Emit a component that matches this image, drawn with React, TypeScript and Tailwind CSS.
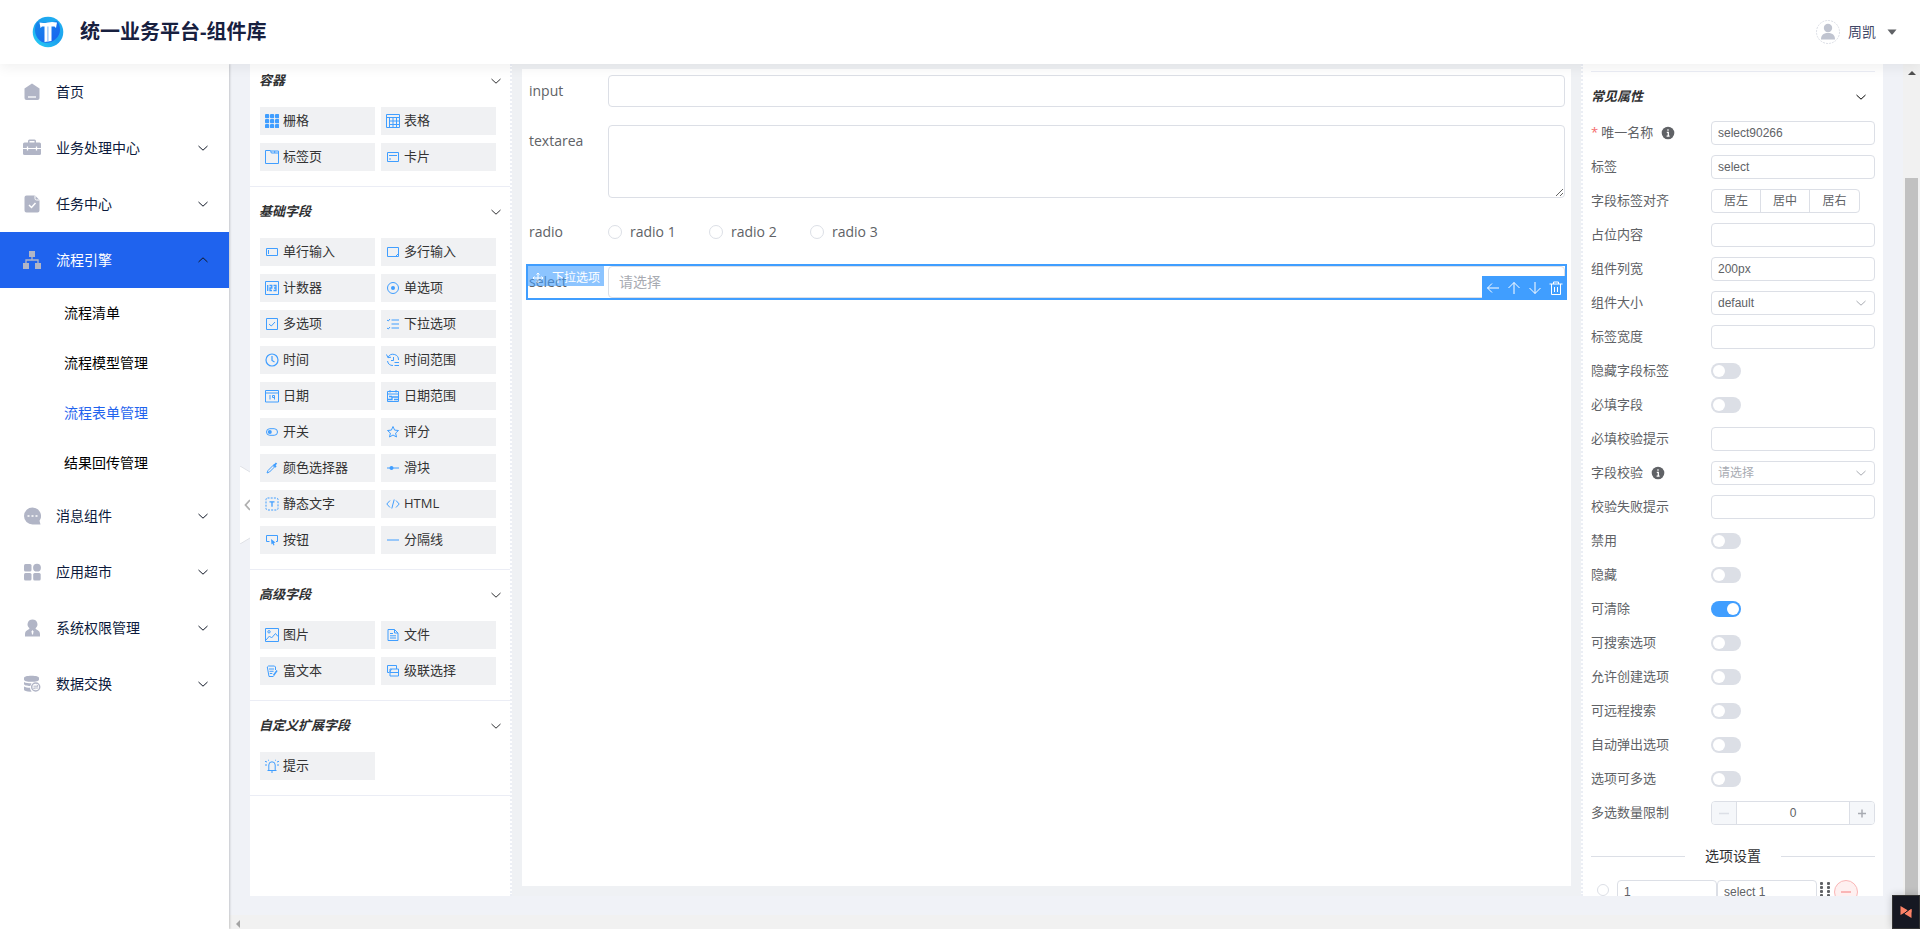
import React from "react";
import clsx from "clsx";

/* ---------- shared icons ---------- */

const Chevron = ({ up, className }: { up?: boolean; className?: string }) => (
    <svg viewBox="0 0 12 12" className={clsx("size-3 shrink-0", className)} fill="none" stroke="currentColor" strokeWidth="1">
        <path d={up ? "M1.5 8 6 3.8 10.5 8" : "M1.5 4 6 8.2 10.5 4"} />
    </svg>
);

const InfoIcon = () => (
    <svg viewBox="0 0 14 14" className="ml-2 size-3.5 shrink-0" fill="#606266">
        <circle cx="7" cy="7" r="6.3" />
        <path d="M7 3.2v1.5M5.8 6.3h1.5v4M5.6 10.2h3" stroke="#fff" strokeWidth="1.3" fill="none" />
    </svg>
);

const Logo = () => (
    <svg viewBox="0 0 32 32" className="size-8">
        <defs>
            <linearGradient id="ring" x1="0" y1="1" x2="1" y2="0">
                <stop offset="0" stopColor="#2bd5f5" />
                <stop offset="0.5" stopColor="#1ba0ee" />
                <stop offset="1" stopColor="#22b4f2" />
            </linearGradient>
            <linearGradient id="core" x1="0" y1="0" x2="1" y2="1">
                <stop offset="0" stopColor="#1689ea" />
                <stop offset="1" stopColor="#1a5ff0" />
            </linearGradient>
        </defs>
        <circle cx="16" cy="16" r="15.3" fill="url(#ring)" />
        <path d="M5 6C1 13 3 22 10 26c9 3 18-4 18-12 0-4-1-7-3-9-7 2-13 2-20 1z" fill="url(#core)" />
        <path d="M7.500 6.500c3 .8 5.700.5 8.200-.1 3-.7 6-.7 9.300.1l-1 5.500-1.500-1.500h-3v14.500l-7 1V10.500h-2.500L8.500 12z" fill="#fff" />
        <path d="M15.300 10.500h1.200v15l-1.200.2z" fill="#8fc1fa" />
    </svg>
);

/* ---------- side menu ---------- */

const menuIcons: Record<string, React.ReactNode> = {
    home: (
        <>
            <path d="M9 .5 16.500 5.500V15a2 2 0 0 1-2 2h-11a2 2 0 0 1-2-2V5.500z" />
            <path d="M5 14h8" stroke="#fff" strokeWidth="1.300" />
        </>
    ),
    case: (
        <>
            <path d="M5 3.500V2a1.500 1.500 0 0 1 1.500-1.500h5A1.500 1.500 0 0 1 13 2v1.500h3.500A1.500 1.500 0 0 1 18 5v4H0V5a1.500 1.500 0 0 1 1.500-1.500zM6.500 3.500h5V2h-5z" fillRule="evenodd" />
            <path d="M0 10h18v4.500a1.500 1.500 0 0 1-1.500 1.500h-15A1.500 1.500 0 0 1 0 14.500z" />
            <path d="M4.500 7.500v4M13.500 7.500v4" stroke="#fff" strokeWidth="1.300" />
        </>
    ),
    task: (
        <>
            <path d="M3.500.5H12l4.500 4.500v10.500a2 2 0 0 1-2 2h-11a2 2 0 0 1-2-2v-13a2 2 0 0 1 2-2z" />
            <path d="M12 .5v3a1.500 1.500 0 0 0 1.500 1.500h3" stroke="#fff" fill="none" />
            <path d="m6 10 2.500 2.500L12.500 8" stroke="#fff" strokeWidth="1.500" fill="none" />
        </>
    ),
    flow: (
        <>
            <path d="M6 0h6v6H6zM0 12h6v6H0zM12 12h6v6h-6z" />
            <path d="M9 5v4M3 12.500V9h12v3.500" stroke="#b1b5c6" strokeWidth="1.300" fill="none" />
        </>
    ),
    message: (
        <>
            <path d="M9.500.5a8.500 8.500 0 0 1 7 13.300l1 3.700H9.500a8.500 8.500 0 0 1 0-17z" />
            <path d="M4.500 8.200h2v1.500h-2zM8.500 8.200h2v1.500h-2zM12.500 8.200h2v1.500h-2z" fill="#fff" />
        </>
    ),
    apps: (
        <>
            <rect x="1" y="1" width="7.500" height="7.500" rx="1.500" />
            <circle cx="14" cy="4.700" r="3.900" />
            <rect x="1" y="10" width="7.500" height="7.500" rx="1.500" />
            <rect x="10.200" y="10" width="7.500" height="7.500" rx="1.500" />
        </>
    ),
    user: (
        <>
            <path d="M9.500.5a4.900 4.900 0 0 1 3 8.800c.2 1 1 1.200 2.300 1.900 1.500.8 2.200 2 2.200 4v2.300H2v-2.300c0-2 .7-3.200 2.200-4 1.300-.7 2.100-.9 2.300-1.900A4.900 4.900 0 0 1 9.500.5z" />
            <path d="m9.500 11 1 1.500-.5 3h-1l-.5-3z" fill="#fff" />
        </>
    ),
    data: (
        <>
            <path d="M1 3C1 1.500 4 .7 8.500.7S16 1.500 16 3v1.500c0 1.500-3 2.300-7.500 2.300S1 6 1 4.500z" />
            <path d="M1 7c2 1.200 4 1.300 7.500 1.300L7.300 11C4 11 1 10.300 1 9zM1 11.500c1.500 1 3.500 1.200 6 1.300.2 1.700.8 3 1.800 3.800C4 16.800 1 16 1 14.500z" />
            <circle cx="12.700" cy="12" r="4" fill="none" stroke="#b1b5c6" strokeWidth="1.500" />
            <path d="M10.500 11.200h4.500l-1.200-1.200M15 13h-4.500l1.200 1.200" stroke="#b1b5c6" fill="none" />
        </>
    ),
};

const menu = [
    { icon: "home", label: "首页" },
    { icon: "case", label: "业务处理中心", expandable: true },
    { icon: "task", label: "任务中心", expandable: true },
    { icon: "flow", label: "流程引擎", expandable: true, children: ["流程清单", "流程模型管理", "流程表单管理", "结果回传管理"] },
    { icon: "message", label: "消息组件", expandable: true },
    { icon: "apps", label: "应用超市", expandable: true },
    { icon: "user", label: "系统权限管理", expandable: true },
    { icon: "data", label: "数据交换", expandable: true },
];

const SideMenu = () => (
    <nav className="z-10 w-[229px] shrink-0 bg-white text-sm text-[#0c1a3c] shadow-[1px_0_2px_rgba(0,0,0,0.18)]">
        {menu.map((item) => (
            <div key={item.label}>
                <button
                    type="button"
                    className={clsx("flex h-14 w-full items-center pr-5 pl-[23px]", item.children && "bg-[#1f63ee] text-white")}
                >
                    <svg viewBox="0 0 18 18" className="size-[18px]" fill="#b1b5c6">
                        {menuIcons[item.icon]}
                    </svg>
                    <span className="ml-[15px] flex-1 text-left">{item.label}</span>
                    {item.expandable && <Chevron up={!!item.children} className="text-[#111827]" />}
                </button>
                {item.children?.map((child) => (
                    <a
                        key={child}
                        href="#"
                        className={clsx("flex h-[50px] items-center pl-16", child === "流程表单管理" ? "text-[#1f63ee]" : "text-black")}
                    >
                        {child}
                    </a>
                ))}
            </div>
        ))}
    </nav>
);

/* ---------- widget palette ---------- */

const widgetIcons: Record<string, React.ReactNode> = {
    栅格: (
        <g fill="#409eff" stroke="none">
            {[0, 5, 10].map((y) =>
                [0, 5, 10].map((x) => <rect key={`${x}-${y}`} x={x} y={y} width="4.200" height="4.200" rx="1" />)
            )}
        </g>
    ),
    表格: <path d="M.5.5h13v13H.5zM.5 3.500h13M3.500 3.500v10M3.500 7h10M3.500 10.500h10M7 3.500v10M10.500 3.500v10" />,
    标签页: <path d="M.5 13.500V.5h5l.8 2.500h7.200v10.500zM6 1h7.500v2M9.700 1v2" />,
    卡片: <path d="M1.500 2.500h11v9h-11zM3 5.500h8M3 9h2" />,
    单行输入: <path d="M1.500 3.500h11v7h-11zM3.500 5v4" />,
    多行输入: <path d="M1.500 2.500h11v9h-11zM10 11l2-2" />,
    计数器: (
        <>
            <path d="M.5.5h13v13H.5z" />
            <path d="M2.700 4v6M4.500 4.500h2.300V7H5v2.500h2M8.500 4.500h2.500v5H8.500M9 7h2" strokeWidth="1.300" />
        </>
    ),
    单选项: (
        <>
            <circle cx="7" cy="7" r="5.500" />
            <circle cx="7" cy="7" r="2" fill="#409eff" stroke="none" />
        </>
    ),
    多选项: <path d="M1.500 1.500h11v11h-11zM4 7l2.300 2L10 5" />,
    下拉选项: <path d="M5.500 3h7.500M5.500 7h7.500M5.500 11h7.500M1 3l1.300 1L4 2M1 11l1.300 1L4 10" />,
    时间: (
        <>
            <circle cx="7" cy="7" r="6" strokeWidth="1.200" />
            <path d="M7 3v4.500l2.500 1.500" strokeWidth="1.200" />
        </>
    ),
    时间范围: (
        <>
            <path d="M2 4.500A5.500 5.500 0 0 1 12.500 7M1.500 8A5.500 5.500 0 0 0 7 12.500" />
            <path d="M.5 1.500 2 4.700l3-.5M7.500 4v3.500H5M8.500 9.500h4.500M8.500 12.500h4.500" />
        </>
    ),
    日期: (
        <>
            <path d="M.5 1.500h13v11.500H.5zM.5 4h13" />
            <path d="M5 6v4.500M9.500 10.500V6.500h-2v2h2" />
        </>
    ),
    日期范围: (
        <>
            <path d="M1.500 2.500h11v10h-11zM1.500 5h11M4 1v2.500M10 1v2.500" />
            <path d="M1.500 10.500H6V8h6.500M3 7.500h3M8 10.500h4" strokeWidth="1.300" />
        </>
    ),
    开关: (
        <>
            <rect x="1.500" y="3.700" width="11" height="6.600" rx="3.300" />
            <circle cx="4.800" cy="7" r="2" fill="#409eff" stroke="none" />
        </>
    ),
    评分: <path d="m7 1.500 1.600 3.600 3.900.4-2.900 2.600.9 3.900L7 10l-3.500 2 .9-3.900-2.900-2.600 3.900-.4z" />,
    颜色选择器: (
        <>
            <path d="m2 12 1-2.500 5-5 1.500 1.500-5 5z" />
            <path d="m8.500 3.500 2.500 2.500M9 5l2.500-3" strokeWidth="1.800" />
        </>
    ),
    滑块: (
        <>
            <path d="M1 7h12" />
            <circle cx="5.500" cy="7" r="2" fill="#409eff" stroke="none" />
        </>
    ),
    静态文字: (
        <>
            <rect x="1" y="1" width="12" height="12" rx="1.500" strokeDasharray="2 1.200" />
            <path d="M4.500 4.800h5M7 4.800v5" strokeWidth="1.300" />
        </>
    ),
    HTML: <path d="M4 3.500.8 7 4 10.500M10 3.500 13.200 7 10 10.500M8.200 2.500 5.800 11.500" />,
    按钮: (
        <>
            <path d="M4.500 8.500H1.500V2.500h11v6h-1.500" />
            <path d="m6 6 4.500 3.500-1.800.4.8 2.100-1 .4-.9-2-1.100 1.100z" fill="#409eff" stroke="none" />
        </>
    ),
    分隔线: <path d="M1 7h12" />,
    图片: (
        <>
            <path d="M.5.5h13v13H.5zM1 12l3.500-4 2 2L10.500 5.500 13 8.500" />
            <circle cx="4" cy="3.800" r="1.200" />
        </>
    ),
    文件: <path d="M2 1.500h6.500l3.500 3.500v7.500H2zM8.500 1.500V5H12M4 5.500h3M4 7.800h6M4 10h6" />,
    富文本: (
        <>
            <path d="M8.500 12.500H4L2.300 3l1.200-1h6l1 1v3M4 5h5M4.500 7.300h4M4.800 9.500h2.500" />
            <path d="m8.500 11.500 3.500-5" strokeWidth="1.500" />
        </>
    ),
    级联选择: <path d="M3 8.500H1.500v-7h9v3.500M4 5h8.500v7H4zM4 8.500h8.500M3.500 8.500l2-3.500" />,
    提示: (
        <>
            <path d="M2.500 11.500h9M3.800 11.500V6a3.200 3.200 0 0 1 6.400 0v5.500M6 13h2" />
            <path d="M0 2.300 2 3M0 6h2M14 2.300 12 3M12 6h2M3 .8l.8.7M11 .8l-.8.7" />
        </>
    ),
};

const groups = [
    { title: "容器", items: ["栅格", "表格", "标签页", "卡片"] },
    {
        title: "基础字段",
        items: [
            "单行输入", "多行输入", "计数器", "单选项", "多选项", "下拉选项",
            "时间", "时间范围", "日期", "日期范围", "开关", "评分",
            "颜色选择器", "滑块", "静态文字", "HTML", "按钮", "分隔线",
        ],
    },
    { title: "高级字段", items: ["图片", "文件", "富文本", "级联选择"] },
    { title: "自定义扩展字段", items: ["提示"] },
];

const Palette = () => (
    <aside className="w-[262px] shrink-0 overflow-hidden border-r-2 border-dotted border-[#ebeef5] bg-white">
        <div className="-mt-2">
            {groups.map((group) => (
                <section key={group.title} className="border-b border-[#ebedf5] pb-[15px]">
                    <button type="button" className="mb-0.5 flex h-[49px] w-full items-center justify-between pr-2 pl-[9px] text-[13px] font-bold text-[#303133] italic">
                        {group.title}
                        <Chevron />
                    </button>
                    <div className="grid grid-cols-[115px_115px] gap-x-1.5 gap-y-2 pl-2.5">
                        {group.items.map((name) => (
                            <button key={name} type="button" className="flex h-7 items-center gap-1 bg-[#f0f1f3] pl-[5px] text-[13px] text-[#333]">
                                <svg viewBox="0 0 14 14" className="size-3.5" fill="none" stroke="#409eff">
                                    {widgetIcons[name]}
                                </svg>
                                {name}
                            </button>
                        ))}
                    </div>
                </section>
            ))}
        </div>
    </aside>
);

/* ---------- form canvas ---------- */

const actions = [
    { name: "选择父级", path: "M13 7H1.500M6 2.500 1.500 7 6 11.500" },
    { name: "上移", path: "M7 13V1.500M1.500 7 7 1.500 12.500 7" },
    { name: "下移", path: "M7 1v11.500M1.500 7 7 12.500 12.500 7" },
    { name: "删除", path: "M.5 3h13M2.500 3v10.500h9V3M4.500 3V1h5v2M5.500 6v5M8.500 6v5" },
];

const Canvas = () => (
    <main className="min-w-0 flex-1 bg-[#eff1f4] px-2.5 pt-[5px] pb-2.5">
        <form className="flex h-full flex-col gap-[18px] bg-white px-[6px] pt-[6px] text-sm text-[#606266]">
            <div className="flex pl-px">
                <label htmlFor="f-input" className="w-[79px] leading-8">input</label>
                <input id="f-input" className="h-8 min-w-0 flex-1 rounded border border-[#dcdfe6] px-[11px] outline-none" />
            </div>
            <div className="flex pl-px">
                <label htmlFor="f-textarea" className="w-[79px] leading-8">textarea</label>
                <textarea id="f-textarea" className="h-[73px] min-w-0 flex-1 resize-y rounded border border-[#dcdfe6] px-[11px] outline-none" />
            </div>
            <fieldset className="flex h-8 items-center pl-px">
                <legend className="float-left w-[79px] leading-8">radio</legend>
                {["radio 1", "radio 2", "radio 3"].map((r) => (
                    <label key={r} className="flex w-[101px] items-center gap-2">
                        <input type="radio" name="f-radio" className="size-3.5 appearance-none rounded-full border border-[#dcdfe6]" />
                        {r}
                    </label>
                ))}
            </fieldset>
            <div className="relative flex pl-px outline-2 outline-[#409eff]">
                <label htmlFor="f-select" className="w-[79px] leading-8">select</label>
                <select id="f-select" className="h-8 min-w-0 flex-1 appearance-none rounded border border-[#dcdfe6] px-2.5 text-[#a8abb2] outline-none">
                    <option>请选择</option>
                </select>
                <div className="absolute top-0 left-0 flex h-5 items-center gap-2 bg-[#409eff] px-1 pt-1 text-xs text-white opacity-60">
                    <svg viewBox="0 0 12 12" className="size-3" fill="none" stroke="currentColor">
                        <path d="M6 1v10M1 6h10M4.500 2.500 6 1l1.500 1.500M4.500 9.500 6 11l1.500-1.500M2.500 4.500 1 6l1.500 1.500M9.500 4.500 11 6 9.500 7.500" />
                    </svg>
                    下拉选项
                </div>
                <div className="absolute -right-0.5 -bottom-0.5 flex h-6 items-center gap-[7px] bg-[#409eff] px-1 text-white">
                    {actions.map((a) => (
                        <button key={a.name} type="button" aria-label={a.name}>
                            <svg viewBox="0 0 14 14" className="size-3.5" fill="none" stroke="currentColor">
                                <path d={a.path} />
                            </svg>
                        </button>
                    ))}
                </div>
            </div>
        </form>
    </main>
);

/* ---------- property panel ---------- */

type Field = {
    label: string;
    kind: "text" | "align" | "select" | "switch" | "number";
    value?: string;
    on?: boolean;
    required?: boolean;
    info?: boolean;
};

const fields: Field[] = [
    { label: "唯一名称", kind: "text", value: "select90266", required: true, info: true },
    { label: "标签", kind: "text", value: "select" },
    { label: "字段标签对齐", kind: "align" },
    { label: "占位内容", kind: "text" },
    { label: "组件列宽", kind: "text", value: "200px" },
    { label: "组件大小", kind: "select", value: "default" },
    { label: "标签宽度", kind: "text" },
    { label: "隐藏字段标签", kind: "switch" },
    { label: "必填字段", kind: "switch" },
    { label: "必填校验提示", kind: "text" },
    { label: "字段校验", kind: "select", info: true },
    { label: "校验失败提示", kind: "text" },
    { label: "禁用", kind: "switch" },
    { label: "隐藏", kind: "switch" },
    { label: "可清除", kind: "switch", on: true },
    { label: "可搜索选项", kind: "switch" },
    { label: "允许创建选项", kind: "switch" },
    { label: "可远程搜索", kind: "switch" },
    { label: "自动弹出选项", kind: "switch" },
    { label: "选项可多选", kind: "switch" },
    { label: "多选数量限制", kind: "number", value: "0" },
];

const inputClass =
    "h-6 w-full min-w-0 rounded border border-[#dcdfe6] bg-white px-[6px] font-['Liberation_Sans','Noto_Sans_CJK_SC',sans-serif] text-xs outline-none";

const Control = ({ field, id }: { field: Field; id: string }) => {
    switch (field.kind) {
        case "text":
            return <input id={id} defaultValue={field.value} className={inputClass} />;
        case "align":
            return (
                <div className="flex h-6 divide-x divide-[#dcdfe6] rounded border border-[#dcdfe6] text-xs">
                    {["居左", "居中", "居右"].map((t) => (
                        <button key={t} type="button" className="w-[49px]">{t}</button>
                    ))}
                </div>
            );
        case "select":
            return (
                <div className="relative w-full">
                    <select id={id} className={clsx(inputClass, "block appearance-none", !field.value && "text-[#a8abb2]")}>
                        <option>{field.value ?? "请选择"}</option>
                    </select>
                    <Chevron className="absolute top-1.5 right-2 text-[#a8abb2]" />
                </div>
            );
        case "switch":
            return (
                <input
                    id={id}
                    type="checkbox"
                    role="switch"
                    defaultChecked={field.on}
                    className="h-4 w-[30px] appearance-none rounded-full bg-[#dcdfe6] p-0.5 before:block before:size-3 before:rounded-full before:bg-white checked:bg-[#409eff] checked:before:ml-3.5"
                />
            );
        case "number":
            return (
                <div className="flex h-6 w-full overflow-hidden rounded border border-[#dcdfe6]">
                    <button type="button" aria-label="减少" className="flex w-[25px] items-center justify-center border-r border-[#dcdfe6] bg-[#f5f7fa]">
                        <svg viewBox="0 0 10 10" className="size-2.5" stroke="#dcdfe6" strokeWidth="1.5"><path d="M0 5.500h10" /></svg>
                    </button>
                    <input id={id} defaultValue={field.value} className="min-w-0 flex-1 text-center font-['Liberation_Sans'] text-xs outline-none" />
                    <button type="button" aria-label="增加" className="flex w-[25px] items-center justify-center border-l border-[#dcdfe6] bg-[#f5f7fa]">
                        <svg viewBox="0 0 10 10" className="size-2.5" stroke="#a8abb2" strokeWidth="1.5"><path d="M1 5.500h8M5 1.500v8" /></svg>
                    </button>
                </div>
            );
    }
};

const Properties = () => (
    <aside className="w-[302px] shrink-0 overflow-hidden border-l-2 border-dotted border-[#ebeef5] bg-white px-2 pt-[7px] text-[13px] text-[#606266]">
        <button type="button" className="flex h-[50px] w-full items-center justify-between border-t border-[#ebedf5] pr-2 font-bold text-[#303133] italic">
            常见属性
            <Chevron className="text-black" />
        </button>
        <div className="flex flex-col gap-2.5">
            {fields.map((f, i) => (
                <div key={f.label} className="flex h-6 items-center">
                    <label htmlFor={`p-${i}`} className="flex w-[120px] shrink-0 items-center">
                        {f.required && <span className="mr-[3px] text-[#f56c6c]">*</span>}
                        {f.label}
                        {f.info && <InfoIcon />}
                    </label>
                    <Control field={f} id={`p-${i}`} />
                </div>
            ))}
        </div>
        <div className="mt-[21px] flex h-5 items-center gap-5 text-sm text-[#303133]">
            <span className="h-px flex-1 bg-[#dcdfe6]" />
            选项设置
            <span className="h-px flex-1 bg-[#dcdfe6]" />
        </div>
        <div className="mt-3.5 flex h-6 items-center pl-1.5">
            <input type="radio" name="default-option" aria-label="默认选项" className="mr-2 mb-1 size-3 shrink-0 appearance-none rounded-full border border-[#dcdfe6]" />
            <input aria-label="选项值" defaultValue="1" className={clsx(inputClass, "max-w-[100px]")} />
            <input aria-label="选项名称" defaultValue="select 1" className={clsx(inputClass, "max-w-[100px]")} />
            <svg viewBox="0 0 12 20" className="mr-0.5 ml-[3px] h-5 w-3 shrink-0" fill="#606266">
                {[0, 4, 8, 12, 16].map((y) => (
                    <g key={y}>
                        <rect x="0" y={y} width="3" height="3" rx="1" />
                        <rect x="7" y={y} width="3" height="3" rx="1" />
                    </g>
                ))}
            </svg>
            <button type="button" aria-label="删除选项" className="flex size-6 shrink-0 items-center justify-center rounded-full border border-[#fab6b6] bg-[#fef0f0]">
                <span className="h-0.5 w-2.5 bg-[#fab6b6]" />
            </button>
        </div>
    </aside>
);

/* ---------- page ---------- */

export default function App() {
    return (
        <div className="flex h-screen flex-col overflow-hidden bg-[#f0f2f7] font-['Open_Sans','Noto_Sans_CJK_SC',sans-serif]">
            <header className="z-20 flex h-16 shrink-0 items-center bg-white pr-[23px] pl-8 shadow-[0_4px_12px_rgba(0,20,20,0.06)]">
                <Logo />
                <h1 className="ml-4 text-xl font-bold text-[#17203f]">统一业务平台-组件库</h1>
                <button type="button" className="ml-auto flex items-center text-sm text-[#3f4666]">
                    <svg viewBox="0 0 24 24" className="mr-2 size-6" fill="#c0c4d0">
                        <circle cx="12" cy="12" r="11.500" fill="#fff" stroke="#dcdfe6" strokeDasharray="2 1" />
                        <circle cx="12" cy="8" r="4.200" />
                        <path d="M5 19.500c0-4 2-6.500 7-6.500s7 2.500 7 6.500z" />
                    </svg>
                    周凯
                    <svg viewBox="0 0 10 6" className="ml-[11px] h-1.5 w-2.5" fill="#606266"><path d="M.5.5h9L5.500 5.500h-1z" /></svg>
                </button>
            </header>

            <div className="flex min-h-0 flex-1">
                <SideMenu />
                <div className="flex min-w-0 flex-1 flex-col">
                    <div className="relative flex min-h-0 flex-1 pr-5 pb-[19px] pl-[21px]">
                        <Palette />
                        <Canvas />
                        <Properties />
                        <button type="button" aria-label="收起" className="absolute top-[402px] left-[11px]">
                            <svg viewBox="0 0 10 78" className="h-[78px] w-2.5">
                                <path d="M0 0 10 6v66L0 78z" fill="#fff" />
                                <path d="M0 0 10 6M10 72 0 78" stroke="#dfe1e6" />
                                <path d="M10 34 5.500 39l4.500 5" stroke="#b0b0b0" strokeWidth="1.800" fill="none" />
                            </svg>
                        </button>
                    </div>
                    <div className="flex h-3.5 items-end bg-[#f1f1f1] pb-px pl-[7px]">
                        <svg viewBox="0 0 4 8" className="h-2 w-1" fill="#a3a3a3"><path d="M4 0v8L0 4z" /></svg>
                    </div>
                </div>
                <div className="flex w-[17px] shrink-0 flex-col items-center bg-[#f1f1f1] pt-[7px]">
                    <svg viewBox="0 0 8 4" className="h-1 w-2" fill="#505050"><path d="M0 4h8L4 0z" /></svg>
                    <div className="mt-[103px] w-[13px] flex-1 bg-[#c1c1c1]" />
                </div>
            </div>

            <button type="button" aria-label="助手" className="fixed right-0 bottom-0 z-30 flex h-[34px] w-7 items-center justify-center border border-[#333] bg-[#161822] shadow-[0_0_8px_rgba(0,0,0,0.2)]">
                <svg viewBox="0 0 12 12" className="size-3" fill="#fd8266">
                    <path d="M.5 0 11.500 6.500V3L.5 9z" />
                    <path d="M11.500 12 4 7.500 11.500 3z" />
                    <path d="M2 9.500 9 3.500" stroke="#161822" />
                </svg>
            </button>
        </div>
    );
}
